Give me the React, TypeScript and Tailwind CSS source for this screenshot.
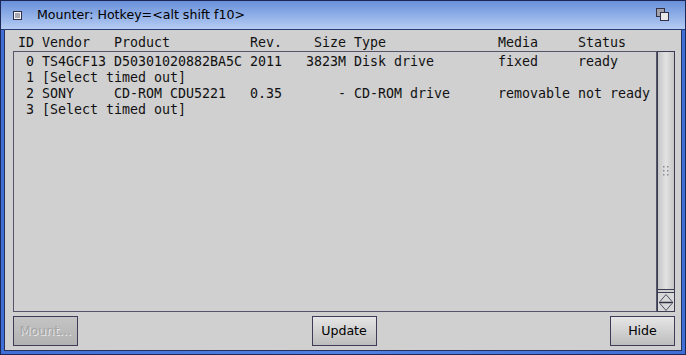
import React from "react";

const mono = "font-['DejaVu_Sans_Mono','Liberation_Mono',monospace] text-[13.3px] leading-[16px] text-[#111]";
const sans = "font-['DejaVu_Sans','Liberation_Sans',sans-serif] text-[12.6px]";

type Row = {
  id: string;
  vendor?: string;
  product?: string;
  rev?: string;
  size?: string;
  type?: string;
  media?: string;
  status?: string;
  note?: string;
};

const rows: Row[] = [
  { id: "0", vendor: "TS4GCF13", product: "D50301020882BA5C", rev: "2011", size: "3823M", type: "Disk drive", media: "fixed", status: "ready" },
  { id: "1", note: "[Select timed out]" },
  { id: "2", vendor: "SONY", product: "CD-ROM CDU5221", rev: "0.35", size: "-", type: "CD-ROM drive", media: "removable", status: "not ready" },
  { id: "3", note: "[Select timed out]" },
];

function Cols({ r }: { r: Row }) {
  if (r.note) {
    return (
      <div className="flex whitespace-pre">
        <span className="w-[16px] text-right">{r.id}</span>
        <span className="w-[8px]" />
        <span>{r.note}</span>
      </div>
    );
  }
  return (
    <div className="flex whitespace-pre">
      <span className="w-[16px] text-right">{r.id}</span>
      <span className="w-[8px]" />
      <span className="w-[72px]">{r.vendor}</span>
      <span className="w-[136px]">{r.product}</span>
      <span className="w-[56px]">{r.rev}</span>
      <span className="w-[40px] text-right">{r.size}</span>
      <span className="w-[8px]" />
      <span className="w-[144px]">{r.type}</span>
      <span className="w-[80px]">{r.media}</span>
      <span>{r.status}</span>
    </div>
  );
}

function Button({ label, disabled }: { label: string; disabled?: boolean }) {
  return (
    <div
      className={
        "w-[65px] h-[30px] flex items-center justify-center border border-[#3c3c58] " +
        sans +
        (disabled
          ? " bg-gradient-to-b from-[#c4c4c4] to-[#b2b2b2] text-[#a4a4a4] [text-shadow:1px_1px_0_#e8e8e8]"
          : " bg-gradient-to-b from-[#e6e6e6] to-[#bdbdbd] text-black")
      }
    >
      {label}
    </div>
  );
}

export default function App() {
  return (
    <div className="w-[686px] h-[355px] flex flex-col bg-[#1c2756] p-px">
      {/* Title bar */}
      <div className="h-[29px] flex items-center bg-gradient-to-b from-[#6890da] to-[#b6ccf2] border-b border-[#2a3a72]">
        <div className="ml-[12px] w-[9px] h-[9px] border border-[#303048] bg-[#f4f4f4] p-px">
          <div className="w-full h-full bg-[#a8a8b0]" />
        </div>
        <div className={"ml-[15px] text-black " + sans}>Mounter: Hotkey=&lt;alt shift f10&gt;</div>
        <div className="flex-1" />
        <svg width="14" height="14" viewBox="0 0 14 14" className="mr-[15px] mb-[1px]">
          <rect x="0.5" y="0.5" width="8" height="8" fill="#a0a0a8" stroke="#303048" />
          <rect x="4.5" y="4.5" width="8" height="8" fill="#e8e8e8" stroke="#303048" />
        </svg>
      </div>
      {/* Body with blue frame */}
      <div className="flex-1 flex flex-col bg-gradient-to-r from-[#3f6fd6] via-[#4f80e2] to-[#3f6fd6] px-[3px] pb-[3px]">
        <div className="flex-1 flex flex-col bg-[#d0d0d0] border border-t-0 border-[#26305a]">
          {/* Header */}
          <div className={"h-[21px] pt-[5px] pl-[13px] " + mono}>
            <div className="flex whitespace-pre">
              <span className="w-[24px]">ID</span>
              <span className="w-[72px]">Vendor</span>
              <span className="w-[136px]">Product</span>
              <span className="w-[56px]">Rev.</span>
              <span className="w-[40px] text-right">Size</span>
              <span className="w-[8px]" />
              <span className="w-[144px]">Type</span>
              <span className="w-[80px]">Media</span>
              <span>Status</span>
            </div>
          </div>
          {/* List + scrollbar */}
          <div className="h-[261px] flex pl-[8px] pr-[6px]">
            <div className={"flex-1 border border-[#55556a] pl-[4px] pt-[2px] " + mono}>
              {rows.map((r) => (
                <Cols key={r.id} r={r} />
              ))}
            </div>
            <div className="w-[18px] flex flex-col border border-[#3c3c52] bg-[#d0d0d0]">
              <div className="flex-1 flex items-center justify-center bg-gradient-to-r from-[#c6c6c6] via-[#e2e2e2] to-[#c6c6c6] border-b border-[#3c3c52]">
                <svg width="8" height="10" viewBox="0 0 8 10">
                  {[0, 4, 8].map((y) => (
                    <g key={y}>
                      <rect x="1" y={y} width="1.5" height="1.5" fill="#8a8a94" />
                      <rect x="5" y={y} width="1.5" height="1.5" fill="#8a8a94" />
                    </g>
                  ))}
                </svg>
              </div>
              <div className="h-[2px]" />
              <div className="h-[19px] border-t border-[#3c3c52] flex items-center justify-center bg-[#d8d8d8]">
                <svg width="16" height="19" viewBox="0 0 16 19">
                  <path d="M2 8.5 L8 1.5 L14 8.5" fill="none" stroke="#505064" strokeWidth="1" />
                  <line x1="1" y1="9.5" x2="15" y2="9.5" stroke="#303044" strokeWidth="1.5" />
                  <path d="M2 10.5 L8 17.5 L14 10.5" fill="none" stroke="#505064" strokeWidth="1" />
                </svg>
              </div>
            </div>
          </div>
          {/* Buttons */}
          <div className="flex items-start justify-between pl-[8px] pr-[6px] pt-[4px]">
            <Button label="Mount..." disabled />
            <Button label="Update" />
            <Button label="Hide" />
          </div>
        </div>
      </div>
    </div>
  );
}
